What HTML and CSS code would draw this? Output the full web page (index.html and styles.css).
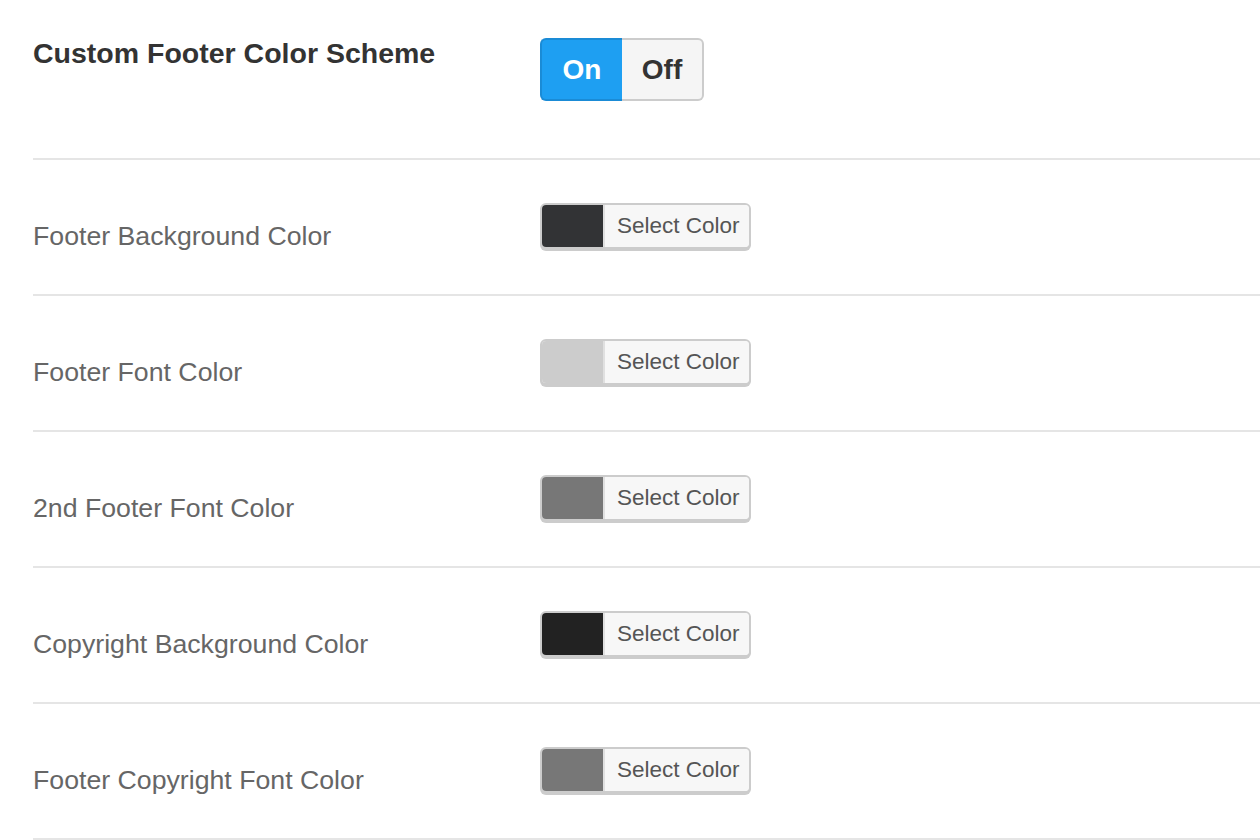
FILE: index.html
```html
<!DOCTYPE html>
<html>
<head>
<meta charset="utf-8">
<link rel="stylesheet" href="styles.css">
</head>
<body>
<div class="options">
  <div class="row row-head">
    <div class="label"><h2 class="heading">Custom Footer Color Scheme</h2></div>
    <div class="control">
      <div class="toggle">
        <span class="toggle-on">On</span>
        <span class="toggle-off">Off</span>
      </div>
    </div>
  </div>
  <div class="row">
    <div class="label"><span class="label-text">Footer Background Color</span></div>
    <div class="control">
      <button class="color-btn"><span class="swatch sw-dark"></span><span class="color-text">Select Color</span></button>
    </div>
  </div>
  <div class="row">
    <div class="label"><span class="label-text">Footer Font Color</span></div>
    <div class="control">
      <button class="color-btn"><span class="swatch sw-light"></span><span class="color-text">Select Color</span></button>
    </div>
  </div>
  <div class="row">
    <div class="label"><span class="label-text">2nd Footer Font Color</span></div>
    <div class="control">
      <button class="color-btn"><span class="swatch sw-mid"></span><span class="color-text">Select Color</span></button>
    </div>
  </div>
  <div class="row">
    <div class="label"><span class="label-text">Copyright Background Color</span></div>
    <div class="control">
      <button class="color-btn"><span class="swatch sw-black"></span><span class="color-text">Select Color</span></button>
    </div>
  </div>
  <div class="row">
    <div class="label"><span class="label-text">Footer Copyright Font Color</span></div>
    <div class="control">
      <button class="color-btn"><span class="swatch sw-mid"></span><span class="color-text">Select Color</span></button>
    </div>
  </div>
</div>
</body>
</html>
```
FILE: styles.css
```css
html, body {
  margin: 0;
  padding: 0;
  background: #ffffff;
}
body {
  font-family: "Liberation Sans", Arial, Helvetica, sans-serif;
  width: 1260px;
  height: 840px;
  overflow: hidden;
}
.options {
  margin-left: 33px;
}
.row {
  display: flex;
  box-sizing: border-box;
  height: 136px;
  padding-top: 43px;
  border-bottom: 2px solid #e5e5e5;
}
.row-head {
  height: 160px;
  padding-top: 38px;
}
.label {
  width: 507px;
  flex: none;
}
.heading {
  margin: 0;
  padding-top: 1px;
  font-size: 28.5px;
  line-height: 28px;
  font-weight: bold;
  color: #333333;
}
.label-text {
  display: block;
  padding-top: 20px;
  font-size: 26.7px;
  line-height: 26px;
  color: #666666;
}
.toggle {
  display: flex;
  height: 63px;
}
.toggle-on, .toggle-off {
  display: flex;
  align-items: center;
  justify-content: center;
  box-sizing: border-box;
  height: 63px;
  font-size: 28px;
  font-weight: bold;
}
.toggle-on {
  width: 82px;
  background: #1e9ff2;
  color: #ffffff;
  border: 2px solid #1a8bd6;
  border-right: none;
  border-radius: 6px 0 0 6px;
}
.toggle-off {
  width: 82px;
  background: #f5f5f5;
  color: #333333;
  border: 2px solid #cccccc;
  border-left: none;
  border-radius: 0 6px 6px 0;
}
.color-btn {
  display: flex;
  box-sizing: border-box;
  height: 46px;
  width: 211px;
  padding: 0;
  margin: 0;
  border: 2px solid #cccccc;
  border-radius: 6px;
  box-shadow: 0 2px 0 #cccccc;
  background: #f7f7f7;
  overflow: hidden;
  font-family: inherit;
  cursor: pointer;
}
.swatch {
  display: block;
  width: 61px;
  height: 100%;
  flex: none;
}
.sw-dark { background: #323335; }
.sw-light { background: #cccccc; }
.sw-mid { background: #777777; }
.sw-black { background: #222222; }
.color-text {
  display: flex;
  align-items: center;
  box-sizing: border-box;
  flex: 1;
  height: 100%;
  padding-left: 12px;
  border-left: 2px solid #e0e0e0;
  background: #f7f7f7;
  font-size: 22.5px;
  color: #555555;
}
```
